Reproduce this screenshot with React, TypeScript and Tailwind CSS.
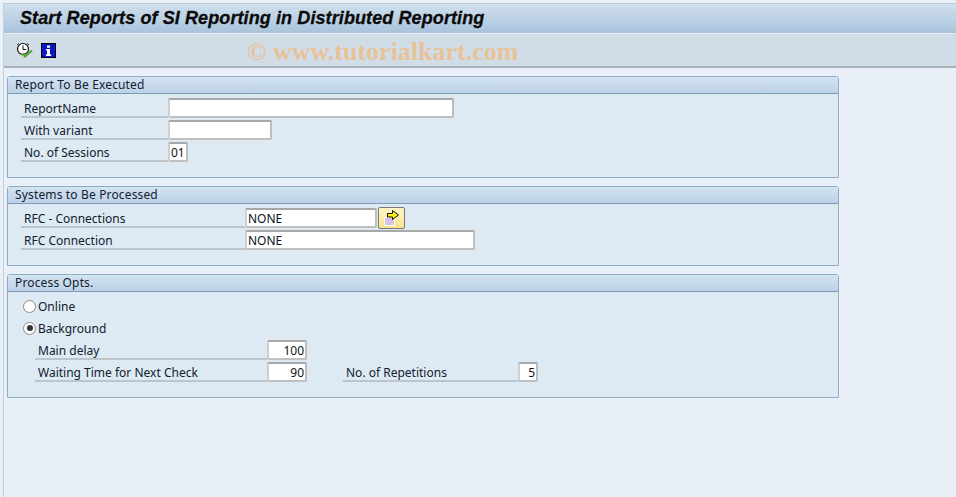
const font = "font-['Noto_Sans',sans-serif]";

function Input({ w, value = "", right = false }: { w: string; value?: string; right?: boolean }) {
  return (
    <div
      className={`${w} h-5 shrink-0 bg-white border-2 border-t-[#a8a8a8] border-l-[#cfcfcf] border-r-[#bdbdbd] border-b-[#c0c0c0] rounded-[2px] flex items-center px-[1px] pt-[1px] text-[12px] leading-none text-[#0d1420] ${right ? "justify-end" : ""}`}
    >
      {value}
    </div>
  );
}

function Label({ w, text }: { w: string; text: string }) {
  return (
    <div className={`${w} h-5 shrink-0 shadow-[inset_0_-2px_0_0_#bcc5cc] pl-[3px] pt-[1px] flex items-center text-[12px] leading-none text-[#12202f]`}>
      {text}
    </div>
  );
}

function Row({ children, className = "" }: { children: React.ReactNode; className?: string }) {
  return <div className={`flex items-center h-5 ${className}`}>{children}</div>;
}

function Panel({ title, height, children }: { title: string; height: string; children: React.ReactNode }) {
  return (
    <section className={`${height} w-[832px] border border-[#8eabc8] rounded-tr-[3px] rounded-tl-[3px] bg-[#dde9f3]`}>
      <div className="h-[17px] border-b border-[#7f9ab5] bg-gradient-to-b from-[#d3e3f1] to-[#bcd2e8] pl-[7px] flex items-center text-[12px] leading-none tracking-[0.15px] text-[#12202f]">
        {title}
      </div>
      {children}
    </section>
  );
}

function Radio({ on, label }: { on?: boolean; label: string }) {
  return (
    <Row className="pl-[15px] gap-[2px]">
      <span className="w-[13px] h-[13px] rounded-full border border-[#8a8a8a] bg-white flex items-center justify-center shrink-0">
        {on && <span className="w-[6px] h-[6px] rounded-full bg-[#333]" />}
      </span>
      <span className="pt-[1px] text-[12px] leading-none text-[#12202f]">{label}</span>
    </Row>
  );
}

export default function App() {
  return (
    <div className={`${font} relative w-[956px] h-[497px] overflow-hidden bg-[#e9f0f7] pl-[3px] pt-[3px]`}>
      <div className="h-full border-l border-[#c5ced6]">
        <header className="h-[31px] bg-gradient-to-b from-[#d0e0ed] to-[#a9c3dc] border-t border-[#c0c8d0] border-b border-b-[#e6eef4] pl-4 pb-[2px] flex items-center">
          <h1 className="font-['Liberation_Sans',sans-serif] italic font-bold text-[18px] leading-none tracking-[0.1px] [-webkit-text-stroke:0.3px_#0a0a0a] text-[#0a0a0a] whitespace-nowrap">
            Start Reports of SI Reporting in Distributed Reporting
          </h1>
        </header>
        <div className="h-[34px] bg-[#d0dde7] border-b-2 border-[#a6b3be] pl-[12px] flex items-center gap-[7px]">
          <svg width="18" height="16" viewBox="0 0 18 16" aria-label="Execute in background">
            <circle cx="7" cy="7" r="5.500" fill="#fff" stroke="#111" strokeWidth="1.200" />
            <path d="M7 3.500V7.500H10" fill="none" stroke="#111" strokeWidth="1" />
            <path d="M2.500 1.500 1.500 3M11.500 1.500 12.500 3" stroke="#111" strokeWidth="1" />
            <path d="M6.500 11.500 9 14.500 16 8.500" fill="none" stroke="#54a830" strokeWidth="2.200" />
          </svg>
          <svg width="15" height="15" viewBox="0 0 15 15" aria-label="Information">
            <rect x="0.500" y="0.500" width="14" height="14" fill="#0a16c8" stroke="#000" />
            <path d="M6 2.500h3v2.200H6zM5 6h4v5.500h1.200V13H4.800v-1.500H6V7.400H5z" fill="#fff" />
          </svg>
        </div>
        <div className="pl-[3px] pt-[8px] flex flex-col gap-2">
          <Panel title="Report To Be Executed" height="h-[102px]">
            <div className="pl-[13px] pt-[4px] flex flex-col gap-[2px]">
              <Row><Label w="w-[147px]" text="ReportName" /><Input w="w-[286px]" /></Row>
              <Row><Label w="w-[147px]" text="With variant" /><Input w="w-[104px]" /></Row>
              <Row><Label w="w-[147px]" text="No. of Sessions" /><Input w="w-5" value="01" /></Row>
            </div>
          </Panel>
          <Panel title="Systems to Be Processed" height="h-[80px]">
            <div className="pl-[13px] pt-[4px] flex flex-col gap-[2px]">
              <Row>
                <Label w="w-[224px]" text="RFC - Connections" />
                <Input w="w-[132px]" value="NONE" />
                <button className="ml-[1px] w-[27px] h-[22px] rounded-[2px] border border-[#77777a] bg-gradient-to-b from-[#fff6c8] to-[#fbe28c] flex items-center justify-center">
                  <svg width="18" height="18" viewBox="0 0 18 18" aria-label="Multiple selection">
                    <rect x="1.500" y="8.500" width="10" height="8" fill="#d8c4e0" stroke="#fff" />
                    <path d="M4.500 4.500h5V1.500L15.500 6 9.500 10.500V8h-5z" fill="#fff200" stroke="#111" strokeWidth="1" />
                  </svg>
                </button>
              </Row>
              <Row><Label w="w-[224px]" text="RFC Connection" /><Input w="w-[230px]" value="NONE" /></Row>
            </div>
          </Panel>
          <Panel title="Process Opts." height="h-[124px]">
            <div className="pt-[4px] flex flex-col gap-[2px]">
              <Radio label="Online" />
              <Radio on label="Background" />
              <Row className="pl-[27px]"><Label w="w-[232px]" text="Main delay" /><Input w="w-10" value="100" right /></Row>
              <Row className="pl-[27px]">
                <Label w="w-[232px]" text="Waiting Time for Next Check" />
                <Input w="w-10" value="90" right />
                <div className="w-[36px] shrink-0" />
                <Label w="w-[175px]" text="No. of Repetitions" />
                <Input w="w-5" value="5" right />
              </Row>
            </div>
          </Panel>
        </div>
      </div>
      <div className="absolute left-[247px] top-[37px] font-['Liberation_Serif',serif] font-bold text-[26px] leading-[30px] text-[#e8c299] whitespace-nowrap">
        © www.tutorialkart.com
      </div>
    </div>
  );
}
